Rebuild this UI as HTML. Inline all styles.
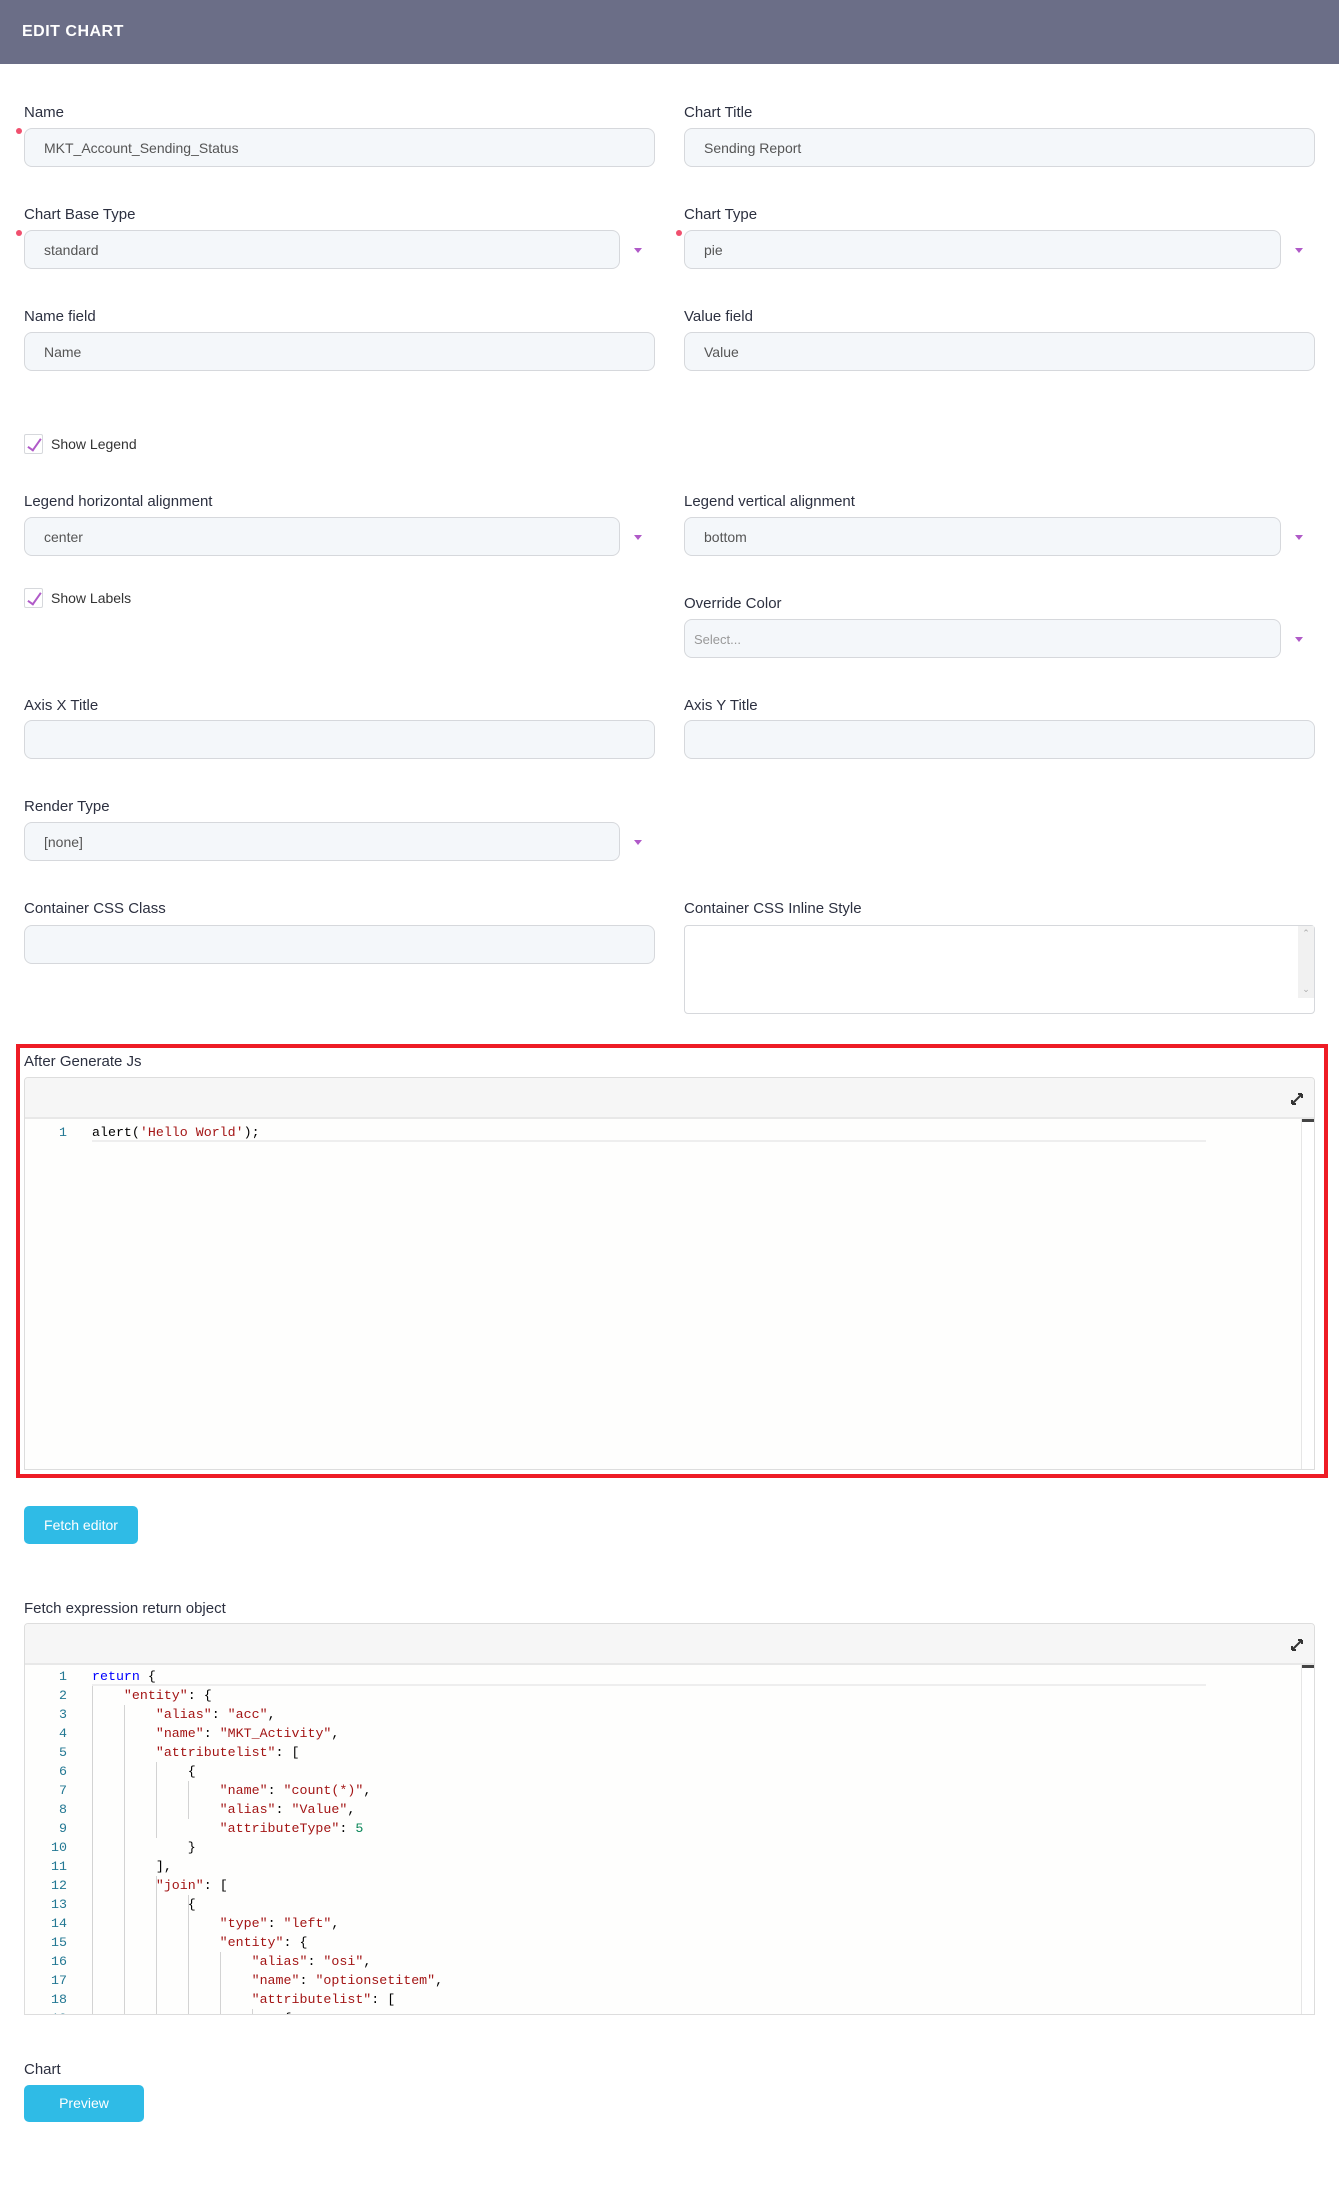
<!DOCTYPE html>
<html><head><meta charset="utf-8">
<style>
*{box-sizing:border-box;margin:0;padding:0}
body{width:1339px;height:2185px;background:#fff;font-family:"Liberation Sans",sans-serif;position:relative;overflow:hidden;color:#333}
.hdr{position:absolute;left:0;top:0;width:1339px;height:64px;background:#6b6e87;color:#fff;font-weight:bold;font-size:16px;letter-spacing:.5px;line-height:64px;padding-left:22px}
.lbl{position:absolute;font-size:15px;color:#2c3040;line-height:18px;margin-top:2px}
.in{position:absolute;height:39px;background:#f4f7fa;border:1px solid #d6d8dc;border-radius:8px;font-size:14px;color:#555;line-height:39px;padding-left:19px}
.arr{position:absolute;width:0;height:0;border-left:4px solid transparent;border-right:4px solid transparent;border-top:5px solid #b05ac8}
.dot{position:absolute;width:6px;height:6px;border-radius:50%;background:#f0506e}
.cb{position:absolute;width:19px;height:20px;border:1px solid #d6d8dc;border-radius:2px}
.cb:after{content:"";position:absolute;left:6px;top:1px;width:5px;height:13px;border-right:2px solid #b05ac8;border-bottom:2px solid #b05ac8;transform:rotate(35deg)}
.cbl{position:absolute;font-size:14px;color:#333}
.ed{position:absolute;left:24px;width:1291px;border:1px solid #ddd;border-radius:4px 4px 0 0;background:#fefefd;overflow:hidden}
.tb{height:41px;background:#f6f6f6;border-bottom:2px solid #e8e8e8;position:relative}
.exp{position:absolute;right:10px;top:14px}
.sb{position:absolute;right:0;top:41px;bottom:0;width:13px;border-left:1px solid #e6e6e6;background:#fff}
.sb:before{content:"";position:absolute;left:0;right:0;top:0;height:3px;background:#444}
.code{position:absolute;left:0;top:43px;right:13px;font-family:"Liberation Mono",monospace;font-size:13.3px}
.ln{position:absolute;left:0;width:42px;text-align:right;color:#237893}
.tx{position:absolute;left:67px;white-space:pre;color:#000}
.s{color:#a31515}.k{color:#0000ff}.n{color:#098658}
.btn{position:absolute;background:#2fbbe6;color:#fff;font-size:14px;text-align:center;border-radius:5px}
.g{position:absolute;width:1px;background:#d3d3d3}
</style></head><body>
<div class="hdr">EDIT CHART</div>

<div class="lbl" style="left:24px;top:102px">Name</div>
<div class="dot" style="left:16px;top:128px"></div>
<div class="in" style="left:24px;top:128px;width:631px">MKT_Account_Sending_Status</div>
<div class="lbl" style="left:684px;top:102px">Chart Title</div>
<div class="in" style="left:684px;top:128px;width:631px">Sending Report</div>

<div class="lbl" style="left:24px;top:204px">Chart Base Type</div>
<div class="dot" style="left:16px;top:230px"></div>
<div class="in" style="left:24px;top:230px;width:596px">standard</div>
<div class="arr" style="left:634px;top:248px"></div>
<div class="lbl" style="left:684px;top:204px">Chart Type</div>
<div class="dot" style="left:676px;top:230px"></div>
<div class="in" style="left:684px;top:230px;width:597px">pie</div>
<div class="arr" style="left:1295px;top:248px"></div>

<div class="lbl" style="left:24px;top:306px">Name field</div>
<div class="in" style="left:24px;top:332px;width:631px">Name</div>
<div class="lbl" style="left:684px;top:306px">Value field</div>
<div class="in" style="left:684px;top:332px;width:631px">Value</div>

<div class="cb" style="left:24px;top:434px"></div>
<div class="cbl" style="left:51px;top:436px">Show Legend</div>

<div class="lbl" style="left:24px;top:491px">Legend horizontal alignment</div>
<div class="in" style="left:24px;top:517px;width:596px">center</div>
<div class="arr" style="left:634px;top:535px"></div>
<div class="lbl" style="left:684px;top:491px">Legend vertical alignment</div>
<div class="in" style="left:684px;top:517px;width:597px">bottom</div>
<div class="arr" style="left:1295px;top:535px"></div>

<div class="cb" style="left:24px;top:588px"></div>
<div class="cbl" style="left:51px;top:590px">Show Labels</div>
<div class="lbl" style="left:684px;top:593px">Override Color</div>
<div class="in" style="left:684px;top:619px;width:597px;padding-left:9px;color:#999;font-size:13px">Select...</div>
<div class="arr" style="left:1295px;top:637px"></div>

<div class="lbl" style="left:24px;top:695px">Axis X Title</div>
<div class="in" style="left:24px;top:720px;width:631px"></div>
<div class="lbl" style="left:684px;top:695px">Axis Y Title</div>
<div class="in" style="left:684px;top:720px;width:631px"></div>

<div class="lbl" style="left:24px;top:796px">Render Type</div>
<div class="in" style="left:24px;top:822px;width:596px">[none]</div>
<div class="arr" style="left:634px;top:840px"></div>

<div class="lbl" style="left:24px;top:898px">Container CSS Class</div>
<div class="in" style="left:24px;top:925px;width:631px"></div>
<div class="lbl" style="left:684px;top:898px">Container CSS Inline Style</div>
<div style="position:absolute;left:684px;top:925px;width:631px;height:89px;border:1px solid #d6d8dc;border-radius:4px;background:#fff">
<div style="position:absolute;right:0;top:0;width:16px;height:72px;background:#f1f1f1;color:#aaa;font-size:9px;text-align:center;line-height:14px">&#8963;<br><br><br><br>&#8964;</div></div>

<div style="position:absolute;left:16px;top:1044px;width:1312px;height:434px;border:4px solid #ee1c25"></div>
<div class="lbl" style="left:24px;top:1051px">After Generate Js</div>
<div class="ed" style="top:1077px;height:393px">
<div class="tb"><svg class="exp" width="14" height="14" viewBox="0 0 14 14"><path d="M2 12L12 2M12 2H8M12 2V6M2 12H6M2 12V8" stroke="#333" stroke-width="2" fill="none"/></svg></div>
<div class="sb"></div>
<div class="code"><div style="position:absolute;left:67px;top:2px;width:1114px;height:19px;border-bottom:2px solid #eee"></div>
<div class="ln" style="top:2px;line-height:19px">1</div><div class="tx" style="top:2px;line-height:19px">alert(<span class="s">'Hello World'</span>);</div></div>
</div>

<div class="btn" style="left:24px;top:1506px;width:114px;height:38px;line-height:38px">Fetch editor</div>

<div class="lbl" style="left:24px;top:1598px">Fetch expression return object</div>
<div class="ed" style="top:1623px;height:392px">
<div class="tb"><svg class="exp" width="14" height="14" viewBox="0 0 14 14"><path d="M2 12L12 2M12 2H8M12 2V6M2 12H6M2 12V8" stroke="#333" stroke-width="2" fill="none"/></svg></div>
<div class="sb"></div>
<div class="code" style="line-height:19px">
<div style="position:absolute;left:67px;top:0;width:1114px;height:19px;border-bottom:2px solid #eee"></div>
<div class="g" style="left:67px;top:19px;height:340px"></div>
<div class="g" style="left:99px;top:38px;height:320px"></div>
<div class="g" style="left:131px;top:95px;height:76px"></div>
<div class="g" style="left:131px;top:209px;height:150px"></div>
<div class="g" style="left:163px;top:114px;height:38px"></div>
<div class="g" style="left:163px;top:228px;height:130px"></div>
<div class="g" style="left:195px;top:285px;height:74px"></div>
<div class="g" style="left:227px;top:342px;height:17px"></div>
<div class="ln" style="top:0">1<br>2<br>3<br>4<br>5<br>6<br>7<br>8<br>9<br>10<br>11<br>12<br>13<br>14<br>15<br>16<br>17<br>18<br>19</div>
<div class="tx" style="top:0"><span class="k">return</span> {
    <span class="s">"entity"</span>: {
        <span class="s">"alias"</span>: <span class="s">"acc"</span>,
        <span class="s">"name"</span>: <span class="s">"MKT_Activity"</span>,
        <span class="s">"attributelist"</span>: [
            {
                <span class="s">"name"</span>: <span class="s">"count(*)"</span>,
                <span class="s">"alias"</span>: <span class="s">"Value"</span>,
                <span class="s">"attributeType"</span>: <span class="n">5</span>
            }
        ],
        <span class="s">"join"</span>: [
            {
                <span class="s">"type"</span>: <span class="s">"left"</span>,
                <span class="s">"entity"</span>: {
                    <span class="s">"alias"</span>: <span class="s">"osi"</span>,
                    <span class="s">"name"</span>: <span class="s">"optionsetitem"</span>,
                    <span class="s">"attributelist"</span>: [
                        {</div>
</div>
</div>

<div class="lbl" style="left:24px;top:2059px">Chart</div>
<div class="btn" style="left:24px;top:2085px;width:120px;height:37px;line-height:37px">Preview</div>
</body></html>
